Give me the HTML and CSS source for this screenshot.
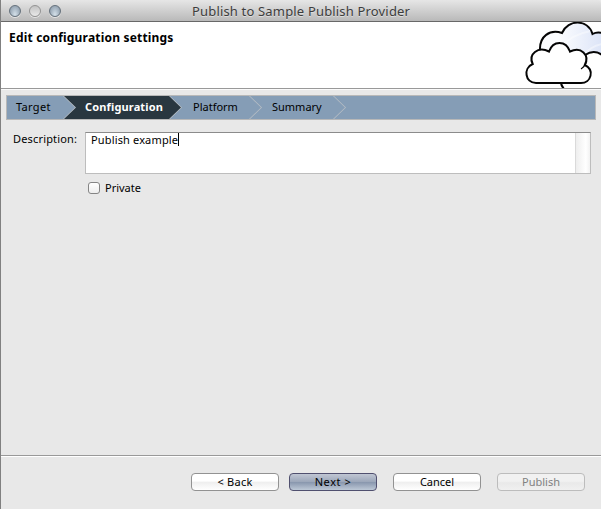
FILE: index.html
```html
<!DOCTYPE html>
<html lang="en">
<head>
<meta charset="utf-8">
<title>Publish to Sample Publish Provider</title>
<link rel="stylesheet" href="styles.css">
</head>
<body>
<main class="window">
  <header class="titlebar">
    <div class="controls"><i class="light"></i><i class="light pale"></i><i class="light"></i></div>
    <span class="title">Publish to Sample Publish Provider</span>
  </header>
  <section class="banner">
    <h1>Edit configuration settings</h1>
    <svg class="clouds" width="79" height="66" viewBox="0 0 79 66">
      <defs><linearGradient id="sky" x1="0" x2="1"><stop offset=".3" stop-color="#fcfdff"/><stop offset="1" stop-color="#dce4f7"/></linearGradient></defs>
      <path d="M18 29C17 14 28 7 40 11C46 -3 66 -3 70.500 12Q75 9.500 80 11V34Q72 27 63 33L40 60H18Z" fill="url(#sky)"/>
      <path d="M38 26Q50 12 69 9M60 34Q69 24 80 22" fill="none" stroke="#fff" stroke-width="2" opacity=".4"/>
      <path d="M18 29C17 14 28 7 40 11C46 -3 66 -3 70.500 12Q75 9.500 80 11M63 33Q72 27 80 33M39 61Q39.500 64 42 67" fill="none" stroke="#050505" stroke-width="2"/>
      <path d="M14 61C3 61 1 46 10.700 42C6 32 16 24 27 29.500C31 18 44 18 48 29.500C59 24 68 33 62.800 43C73 48 69 61 59 61Z" fill="#fff" stroke="#050505" stroke-width="2"/>
      <path d="M59 47Q62 45.500 64 41" fill="none" stroke="#050505" stroke-width="1.300"/>
    </svg>
  </section>
  <section class="content">
    <nav class="steps">
      <span class="step target"><b>Target</b></span>
      <span class="step current"><b>Configuration</b></span>
      <span class="step platform"><b>Platform</b></span>
      <span class="step summary"><b>Summary</b></span>
    </nav>
    <div class="field">
      <label class="description">Description:</label>
      <div class="textarea"><div class="value"><span>Publish example</span><i class="caret"></i></div><div class="scroll"></div></div>
    </div>
    <label class="check"><i class="box"></i><span>Private</span></label>
  </section>
  <footer class="actions">
    <button><span class="back">&lt; Back</span></button>
    <button class="primary"><span class="next">Next &gt;</span></button>
    <button class="cancel"><span>Cancel</span></button>
    <button class="publish" disabled><span>Publish</span></button>
  </footer>
</main>
</body>
</html>
```
FILE: styles.css
```css
* { box-sizing: border-box; }
body { margin: 0; overflow: hidden; font: 11px/14px "Lucida Grande", "Noto Sans", sans-serif; color: #000; }
.window { width: 601px; height: 509px; display: flex; flex-direction: column; background: #e8e8e8; border-left: 1px solid #808080; }
.titlebar { height: 22px; flex: none; display: grid; grid-template-columns: 191px 1fr; align-items: center; background: linear-gradient(#e6e6e6, #b9b9b9); border-bottom: 1px solid #686868; border-radius: 4px 4px 0 0; }
.controls { display: flex; gap: 8px; padding-left: 8px; }
.light { width: 12px; height: 12px; border: 1px solid #65717c; border-radius: 50%; background: radial-gradient(ellipse at 50% 85%, #d4e0e9, #9aa9b7 70%, #788795); box-shadow: 0 1px #e4e4e4; }
.light.pale { border-color: #939393; background: linear-gradient(#c3c3c3, #e9e9e9); }
.title { font-size: 13px; line-height: 18px; letter-spacing: .17px; color: #3d3d3d; text-shadow: 0 1px #dedede; white-space: nowrap; padding-top: 1px; }
.banner { height: 67px; flex: none; display: flex; justify-content: space-between; background: #fff; border-bottom: 1px solid #999; }
h1 { margin: 8px 0 0 8px; font-size: 12px; line-height: 16px; letter-spacing: .19px; }
.clouds { display: block; }
.content { flex: 1; border-top: 1px solid #fafafa; padding: 5px 5px 0 5px; }
.steps { height: 25px; display: flex; background: #859db6; border: 1px solid #b8b8b8; }
.step { height: 23px; position: relative; display: block; line-height: 22px; }
.step b { font-weight: 400; }
.target { width: 56px; padding-left: 9px; letter-spacing: .33px; }
.current { width: 119px; padding-left: 22px; margin-right: -12px; background: #b9bfc5; color: #fff; letter-spacing: .15px; clip-path: polygon(0 0, 107px 0, 119px 50%, 107px 100%, 0 100%, 12px 50%); }
.current::before { content: ""; position: absolute; inset: 0; background: #293740; clip-path: polygon(1px 0, 106px 0, 118px 50%, 106px 100%, 1px 100%, 13px 50%); }
.current b { position: relative; font-weight: 700; }
.platform { width: 92px; padding-left: 23px; margin-right: -12px; }
.summary { width: 96px; padding-left: 22px; }
.platform::after, .summary::after { content: ""; position: absolute; right: 0; top: 0; width: 13px; height: 23px; background: #b9bfc5; clip-path: polygon(0 0, 1px 0, 13px 50%, 1px 100%, 0 100%, 12px 50%); }
.field { display: flex; margin-top: 12px; }
.description { width: 79px; padding-left: 7px; letter-spacing: .17px; white-space: nowrap; }
.textarea { width: 506px; height: 42px; display: flex; border: 1px solid #bdbdbd; border-top-color: #8b8b8b; background: #fff; }
.value { flex: 1; display: flex; padding-left: 5px; letter-spacing: .15px; }
.caret { width: 1px; height: 13px; background: #000; }
.scroll { width: 15px; border-left: 1px solid #dadada; background: linear-gradient(90deg, #eee, #fff 70%, #f2f2f2); }
.check { display: flex; align-items: center; gap: 5px; margin: 7px 0 0 82px; }
.box { width: 12px; height: 12px; border: 1px solid #858585; border-radius: 3px; background: linear-gradient(#fff, #eee); }
.actions { height: 54px; flex: none; display: flex; gap: 10px; padding: 17px 0 0 190px; border-top: 1px solid #999; box-shadow: inset 0 1px #fff; }
button { width: 88px; height: 18px; padding: 0; border: 1px solid #929292; border-radius: 4px; background: linear-gradient(#fff 0 45%, #eee 50%, #fff); font: inherit; line-height: 16px; color: #000; display: flex; justify-content: center; }
.back { letter-spacing: .25px; }
.next { letter-spacing: .55px; }
.primary { border-color: #50506f; background: linear-gradient(#c0c6d3, #9ca7ba 48%, #8997ae 52%, #bdc8d6); }
.cancel, .publish { margin-left: 6px; }
.publish { border-color: #bcbcbc; background: linear-gradient(#f1f1f1 45%, #e9e9e9 55%, #f0f0f0); color: #818181; }
```
